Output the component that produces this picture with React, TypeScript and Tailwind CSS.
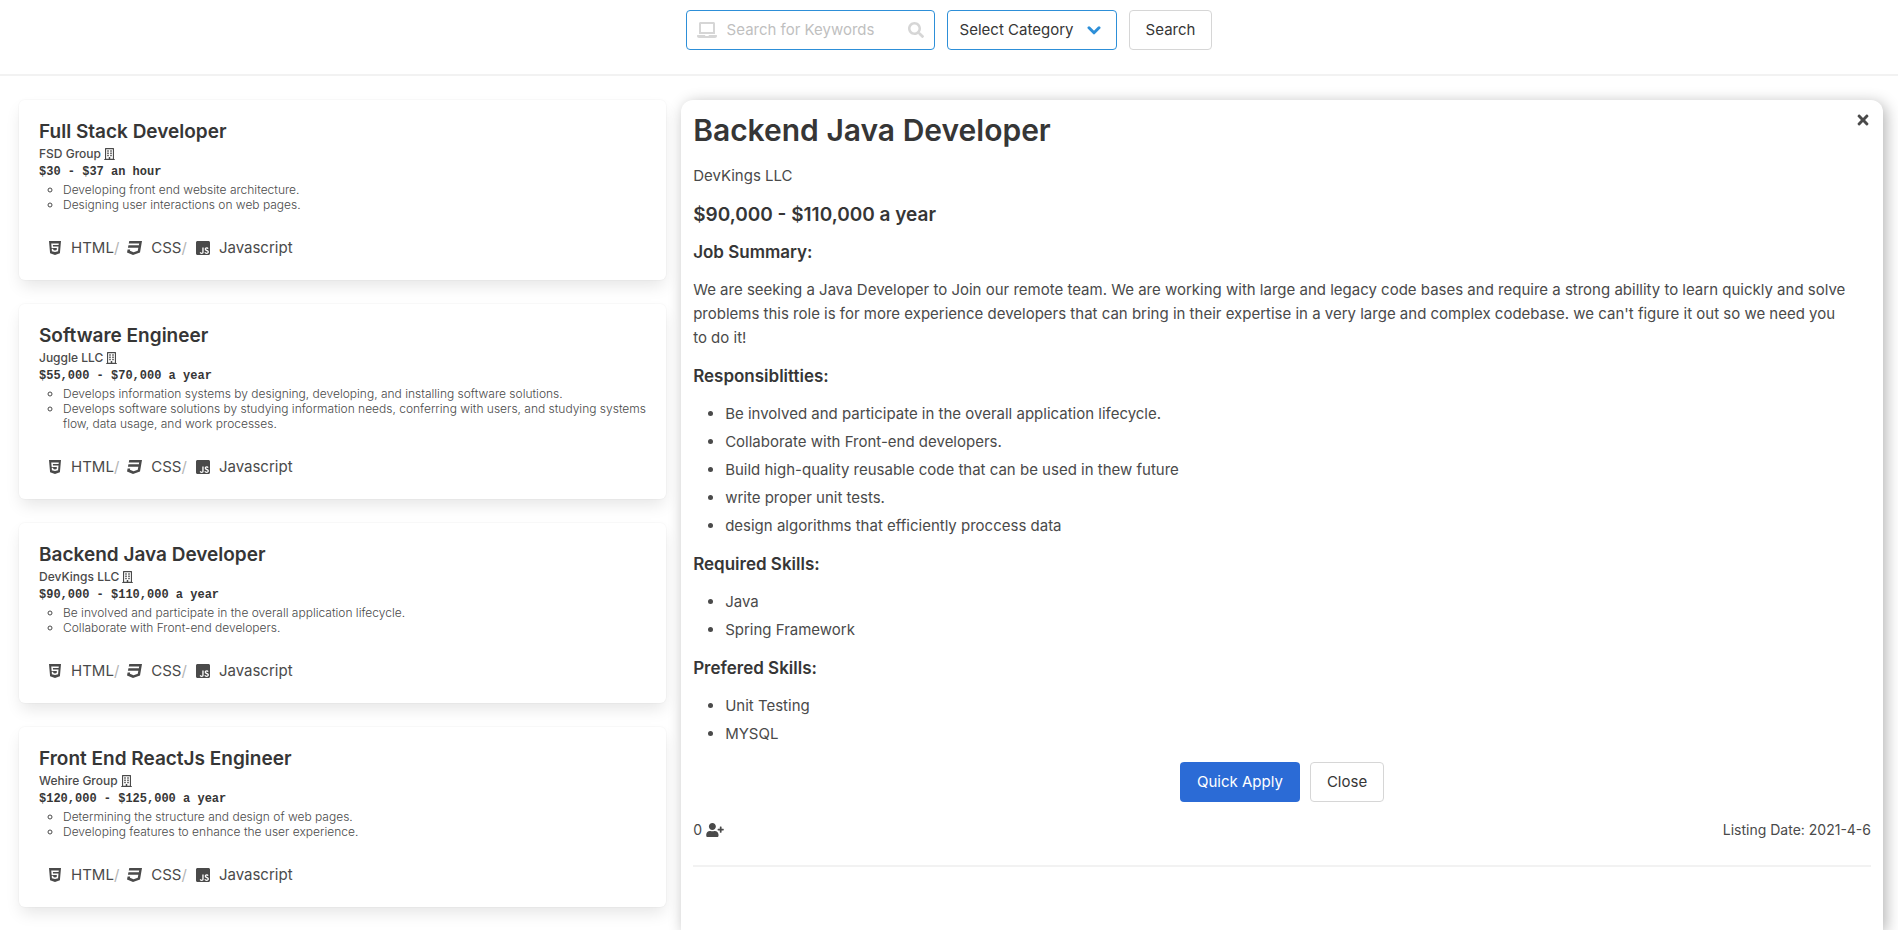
import React from "react";
import {
  FaCss3,
  FaHtml5,
  FaJsSquare,
  FaLaptop,
  FaRegBuilding,
  FaSearch,
  FaTimes,
  FaUserPlus,
} from "react-icons/fa";

type Job = {
  title: string;
  company: string;
  salary: string;
  points: string[];
};

const jobs: Job[] = [
  {
    title: "Full Stack Developer",
    company: "FSD Group",
    salary: "$30 - $37 an hour",
    points: [
      "Developing front end website architecture.",
      "Designing user interactions on web pages.",
    ],
  },
  {
    title: "Software Engineer",
    company: "Juggle LLC",
    salary: "$55,000 - $70,000 a year",
    points: [
      "Develops information systems by designing, developing, and installing software solutions.",
      "Develops software solutions by studying information needs, conferring with users, and studying systems flow, data usage, and work processes.",
    ],
  },
  {
    title: "Backend Java Developer",
    company: "DevKings LLC",
    salary: "$90,000 - $110,000 a year",
    points: [
      "Be involved and participate in the overall application lifecycle.",
      "Collaborate with Front-end developers.",
    ],
  },
  {
    title: "Front End ReactJs Engineer",
    company: "Wehire Group",
    salary: "$120,000 - $125,000 a year",
    points: [
      "Determining the structure and design of web pages.",
      "Developing features to enhance the user experience.",
    ],
  },
];

const sections = [
  {
    heading: "Responsiblitties:",
    items: [
      "Be involved and participate in the overall application lifecycle.",
      "Collaborate with Front-end developers.",
      "Build high-quality reusable code that can be used in thew future",
      "write proper unit tests.",
      "design algorithms that efficiently proccess data",
    ],
  },
  { heading: "Required Skills:", items: ["Java", "Spring Framework"] },
  { heading: "Prefered Skills:", items: ["Unit Testing", "MYSQL"] },
];

const buttonClass =
  "h-10 rounded border border-[#d6d6d6] bg-white px-4 text-[#363636] hover:border-[#b5b5b5]";

function SearchBar() {
  return (
    <form
      className="flex justify-center gap-3 border-b-2 border-[#f2f2f2] pt-2.5 pb-6"
      onSubmit={(e) => e.preventDefault()}
    >
      <div className="flex h-10 w-[249px] items-center rounded border border-[#2d8fd8] px-2.5 text-[#d6d6d6]">
        <FaLaptop className="h-4 w-5 shrink-0" />
        <input
          type="text"
          aria-label="Search for Keywords"
          placeholder="Search for Keywords"
          className="mx-2.5 min-w-0 flex-1 text-[#363636] outline-none placeholder:text-[#bfbfbf]"
        />
        <FaSearch className="h-4 w-4 shrink-0" />
      </div>
      <div className="relative">
        <select
          aria-label="Category"
          className="h-10 w-[170px] appearance-none rounded border border-[#2d8fd8] bg-white pr-10 pl-3 text-[#363636] outline-none"
        >
          <option>Select Category</option>
          <option>Front End</option>
          <option>Back End</option>
        </select>
        <svg
          viewBox="0 0 14 9"
          className="pointer-events-none absolute top-4 right-4 h-[9px] w-3.5 fill-none stroke-[#2d8fd8] stroke-3"
          strokeLinecap="round"
          strokeLinejoin="round"
        >
          <path d="M2 1.8 7 6.8 12 1.8" />
        </svg>
      </div>
      <button type="submit" className={buttonClass}>
        Search
      </button>
    </form>
  );
}

function JobCard({ job }: { job: Job }) {
  return (
    <article className="rounded-md bg-white p-5 shadow-[0_8px_16px_-2px_rgba(10,10,10,0.1),0_0_0_1px_rgba(10,10,10,0.02)]">
      <h2 className="text-[19px] leading-6 font-semibold text-[#363636]">{job.title}</h2>
      <p className="flex items-center gap-[3px] text-xs leading-5 font-medium">
        {job.company}
        <FaRegBuilding className="h-3 w-[11px]" />
      </p>
      <p className="mb-0.5 font-['Liberation_Mono',monospace] text-xs leading-4 font-bold text-[#363636]">
        {job.salary}
      </p>
      <ul className="list-[circle] pl-6 text-xs leading-[15px] font-light">
        {job.points.map((point) => (
          <li key={point}>{point}</li>
        ))}
      </ul>
      <ul className="mt-6 flex gap-2 pl-2 leading-6">
        <li className="flex items-center gap-2">
          <FaHtml5 className="h-4 w-4" />
          <span>
            HTML<span className="text-[#b5b5b5]">/</span>
          </span>
        </li>
        <li className="flex items-center gap-2">
          <FaCss3 className="h-4 w-4" />
          <span>
            CSS<span className="text-[#b5b5b5]">/</span>
          </span>
        </li>
        <li className="flex items-center gap-2">
          <FaJsSquare className="h-4 w-4" />
          <span>Javascript</span>
        </li>
      </ul>
    </article>
  );
}

function JobDetails() {
  return (
    <section className="relative rounded-t-xl bg-white p-3 pb-12 shadow-[3px_3px_15px_rgba(0,0,0,0.3)]">
      <button type="button" aria-label="Close details" className="absolute top-2.5 right-2.5 p-0.5">
        <FaTimes className="h-4 w-4" />
      </button>
      <div className="flex flex-col gap-4">
        <h1 className="text-[30px] leading-9 font-semibold text-[#363636]">
          Backend Java Developer
        </h1>
        <p className="leading-6">DevKings LLC</p>
        <p className="text-[19px] leading-[22px] font-semibold text-[#363636]">
          $90,000 - $110,000 a year
        </p>
        <h3 className="text-[17px] leading-5 font-semibold text-[#363636]">Job Summary:</h3>
        <p className="pr-6 leading-6">
          We are seeking a Java Developer to Join our remote team. We are working with large and
          legacy code bases and require a strong abillity to learn quickly and solve problems this
          role is for more experience developers that can bring in their expertise in a very large
          and complex codebase. we can't figure it out so we need you to do it!
        </p>
        {sections.map((section) => (
          <React.Fragment key={section.heading}>
            <h3 className="text-[17px] leading-5 font-semibold text-[#363636]">
              {section.heading}
            </h3>
            <ul className="flex list-disc flex-col gap-1 pl-8 leading-6">
              {section.items.map((item) => (
                <li key={item}>{item}</li>
              ))}
            </ul>
          </React.Fragment>
        ))}
        <div className="flex justify-center gap-2.5">
          <button
            type="button"
            className="h-10 rounded bg-[#2b6bd6] px-[17px] text-white hover:bg-[#2461c7]"
          >
            Quick Apply
          </button>
          <button type="button" className={buttonClass}>
            Close
          </button>
        </div>
        <div className="flex justify-between text-sm leading-6">
          <span className="flex items-center gap-1">
            0
            <FaUserPlus className="h-3.5 w-[18px]" />
          </span>
          <span>Listing Date: 2021-4-6</span>
        </div>
      </div>
      <hr className="mt-[23px] border-0 border-t-2 border-[#f2f2f2]" />
    </section>
  );
}

export default function App() {
  return (
    <div className="flex min-h-screen flex-col bg-white font-['Inter',sans-serif] text-[15px] text-[#4a4a4a]">
      <SearchBar />
      <main className="grid flex-1 grid-cols-[35fr_65fr] gap-[15px] overflow-hidden pt-6 pr-[15px] pl-[19px]">
        <div className="flex flex-col gap-6">
          {jobs.map((job) => (
            <JobCard key={job.title} job={job} />
          ))}
        </div>
        <JobDetails />
      </main>
    </div>
  );
}
